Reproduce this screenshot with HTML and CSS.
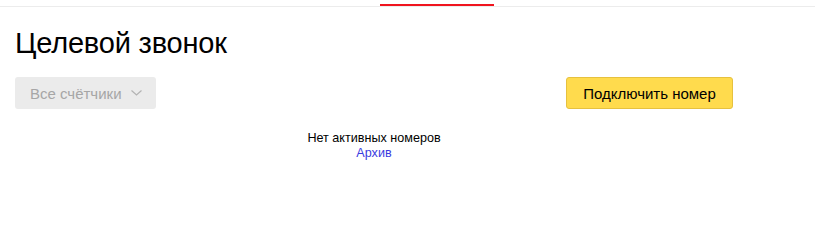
FILE: index.html
```html
<!DOCTYPE html>
<html lang="ru">
<head>
<meta charset="utf-8">
<link rel="stylesheet" href="styles.css">
</head>
<body>
<div class="topbar"><div class="tab-indicator"></div></div>
<main class="page">
  <h1 class="title">Целевой звонок</h1>
  <div class="toolbar">
    <button class="btn btn-gray" disabled>Все счётчики
      <svg class="chev" width="11" height="6" viewBox="0 0 11 6"><path d="M0.5 0.5 L5.5 5 L10.5 0.5" fill="none" stroke="#b3b3b3" stroke-width="1.2"/></svg>
    </button>
    <button class="btn btn-yellow">Подключить номер</button>
  </div>
  <div class="empty">
    <div class="empty-text">Нет активных номеров</div>
    <a class="link" href="#">Архив</a>
  </div>
</main>
</body>
</html>
```
FILE: styles.css
```css
html, body {
  margin: 0;
  padding: 0;
  background: #fff;
  font-family: "Liberation Sans", Arial, sans-serif;
  color: #000;
}
.topbar {
  height: 6px;
  border-bottom: 1px solid #ececec;
  display: flex;
  padding-left: 380px;
}
.tab-indicator {
  margin-top: 4px;
  width: 114px;
  height: 2px;
  background: #f0141e;
}
.page {
  width: 718px;
  padding-left: 15px;
}
.title {
  margin: 0;
  padding-top: 19px;
  font-size: 29px;
  font-weight: normal;
  line-height: 34px;
  letter-spacing: -0.2px;
}
.toolbar {
  margin-top: 17px;
  display: flex;
  justify-content: space-between;
}
.btn {
  height: 32px;
  box-sizing: border-box;
  border-radius: 3px;
  font-family: "Liberation Sans", Arial, sans-serif;
  font-size: 15px;
  display: flex;
  align-items: center;
  padding: 0;
}
.btn-gray {
  width: 141px;
  background: #ebebeb;
  border: none;
  color: #a6a6a6;
  padding-left: 15px;
  gap: 9px;
}
.btn-yellow {
  width: 167px;
  background: #ffdb4d;
  border: 1px solid #e6c13f;
  color: #000;
  justify-content: center;
}
.empty {
  margin-top: 22px;
  text-align: center;
  font-size: 12.6px;
  line-height: 15px;
}
.link {
  color: #3b3be0;
  text-decoration: none;
}
```
